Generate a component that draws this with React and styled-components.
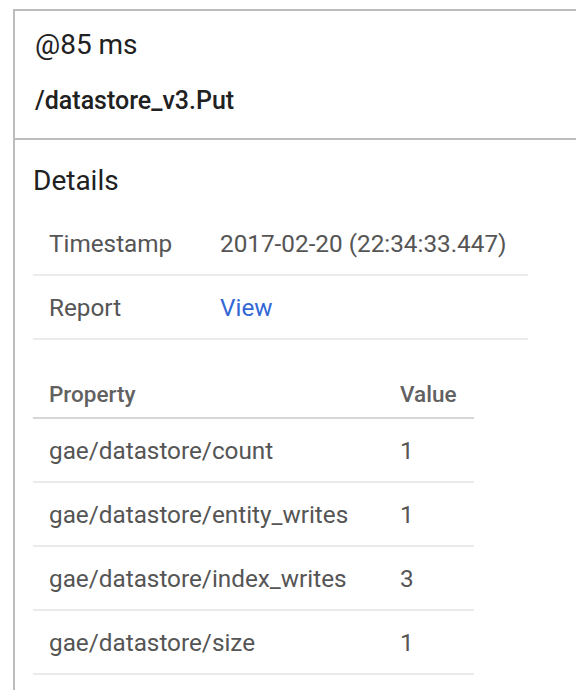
import React from 'react';
import styled, { createGlobalStyle } from 'styled-components';

const GlobalStyle = createGlobalStyle`
  body {
    margin: 0;
    background: #fff;
    font-family: Roboto, 'Liberation Sans', sans-serif;
    overflow: hidden;
  }
`;

// styled components
const Panel = styled.div`
  margin: 9px 0 0 13px;
  border-left: 2px solid #bdbdbd;
  min-height: 700px;
`;

const Header = styled.div`
  border-top: 2px solid #bdbdbd;
  border-bottom: 2px solid #bdbdbd;
  padding: 18px 20px 21px;
`;

const Line = styled.div`
  font-size: ${p => (p.$bold ? 25 : 28)}px;
  line-height: 32px;
  color: #212121;
  font-weight: ${p => (p.$bold ? 500 : 400)};
  margin-top: ${p => p.$gap || 0}px;
`;

const Body = styled.div`
  padding: 25px 0 0 18px;
`;

const SectionTitle = styled.h2`
  margin: 0 0 15px;
  font-size: 28px;
  line-height: 32px;
  font-weight: 400;
  color: #212121;
`;

const Table = styled.div`
  width: ${p => p.$width}px;
`;

const Row = styled.div`
  display: grid;
  grid-template-columns: ${p => p.$cols};
  align-items: center;
  height: ${p => (p.$head ? 47 : 62)}px;
  padding: ${p => (p.$head ? '30px 16px 0' : '0 16px')};
  box-sizing: content-box;
  border-bottom: 2px solid ${p => (p.$head ? '#d6d6d6' : '#ebebeb')};
`;

const Cell = styled.div`
  font-size: ${p => (p.$head ? 22.5 : 24.3)}px;
  font-weight: ${p => (p.$head ? 500 : 400)};
  color: ${p => (p.$head ? '#616161' : '#555')};
  white-space: nowrap;
`;

const Link = styled.a`
  color: #3367d6;
  text-decoration: none;
`;

const details = [
  ['Timestamp', '2017-02-20 (22:34:33.447)'],
];

const props = [
  ['gae/datastore/count', '1'],
  ['gae/datastore/entity_writes', '1'],
  ['gae/datastore/index_writes', '3'],
  ['gae/datastore/size', '1'],
];

const App = () => {
  return (
    <>
      <GlobalStyle />
      <Panel>
        <Header>
          <Line>@85 ms</Line>
          <Line $bold $gap={24}>/datastore_v3.Put</Line>
        </Header>
        <Body>
          <SectionTitle>Details</SectionTitle>
          <Table $width={495}>
            {details.map(([k, v]) => (
              <Row key={k} $cols="171px 1fr">
                <Cell>{k}</Cell>
                <Cell>{v}</Cell>
              </Row>
            ))}
            <Row $cols="171px 1fr">
              <Cell>Report</Cell>
              <Cell><Link href="#">View</Link></Cell>
            </Row>
          </Table>
          <Table $width={441}>
            <Row $head $cols="351px 1fr">
              <Cell $head>Property</Cell>
              <Cell $head>Value</Cell>
            </Row>
            {props.map(([k, v]) => (
              <Row key={k} $cols="351px 1fr">
                <Cell>{k}</Cell>
                <Cell>{v}</Cell>
              </Row>
            ))}
          </Table>
        </Body>
      </Panel>
    </>
  );
};

export default App;
